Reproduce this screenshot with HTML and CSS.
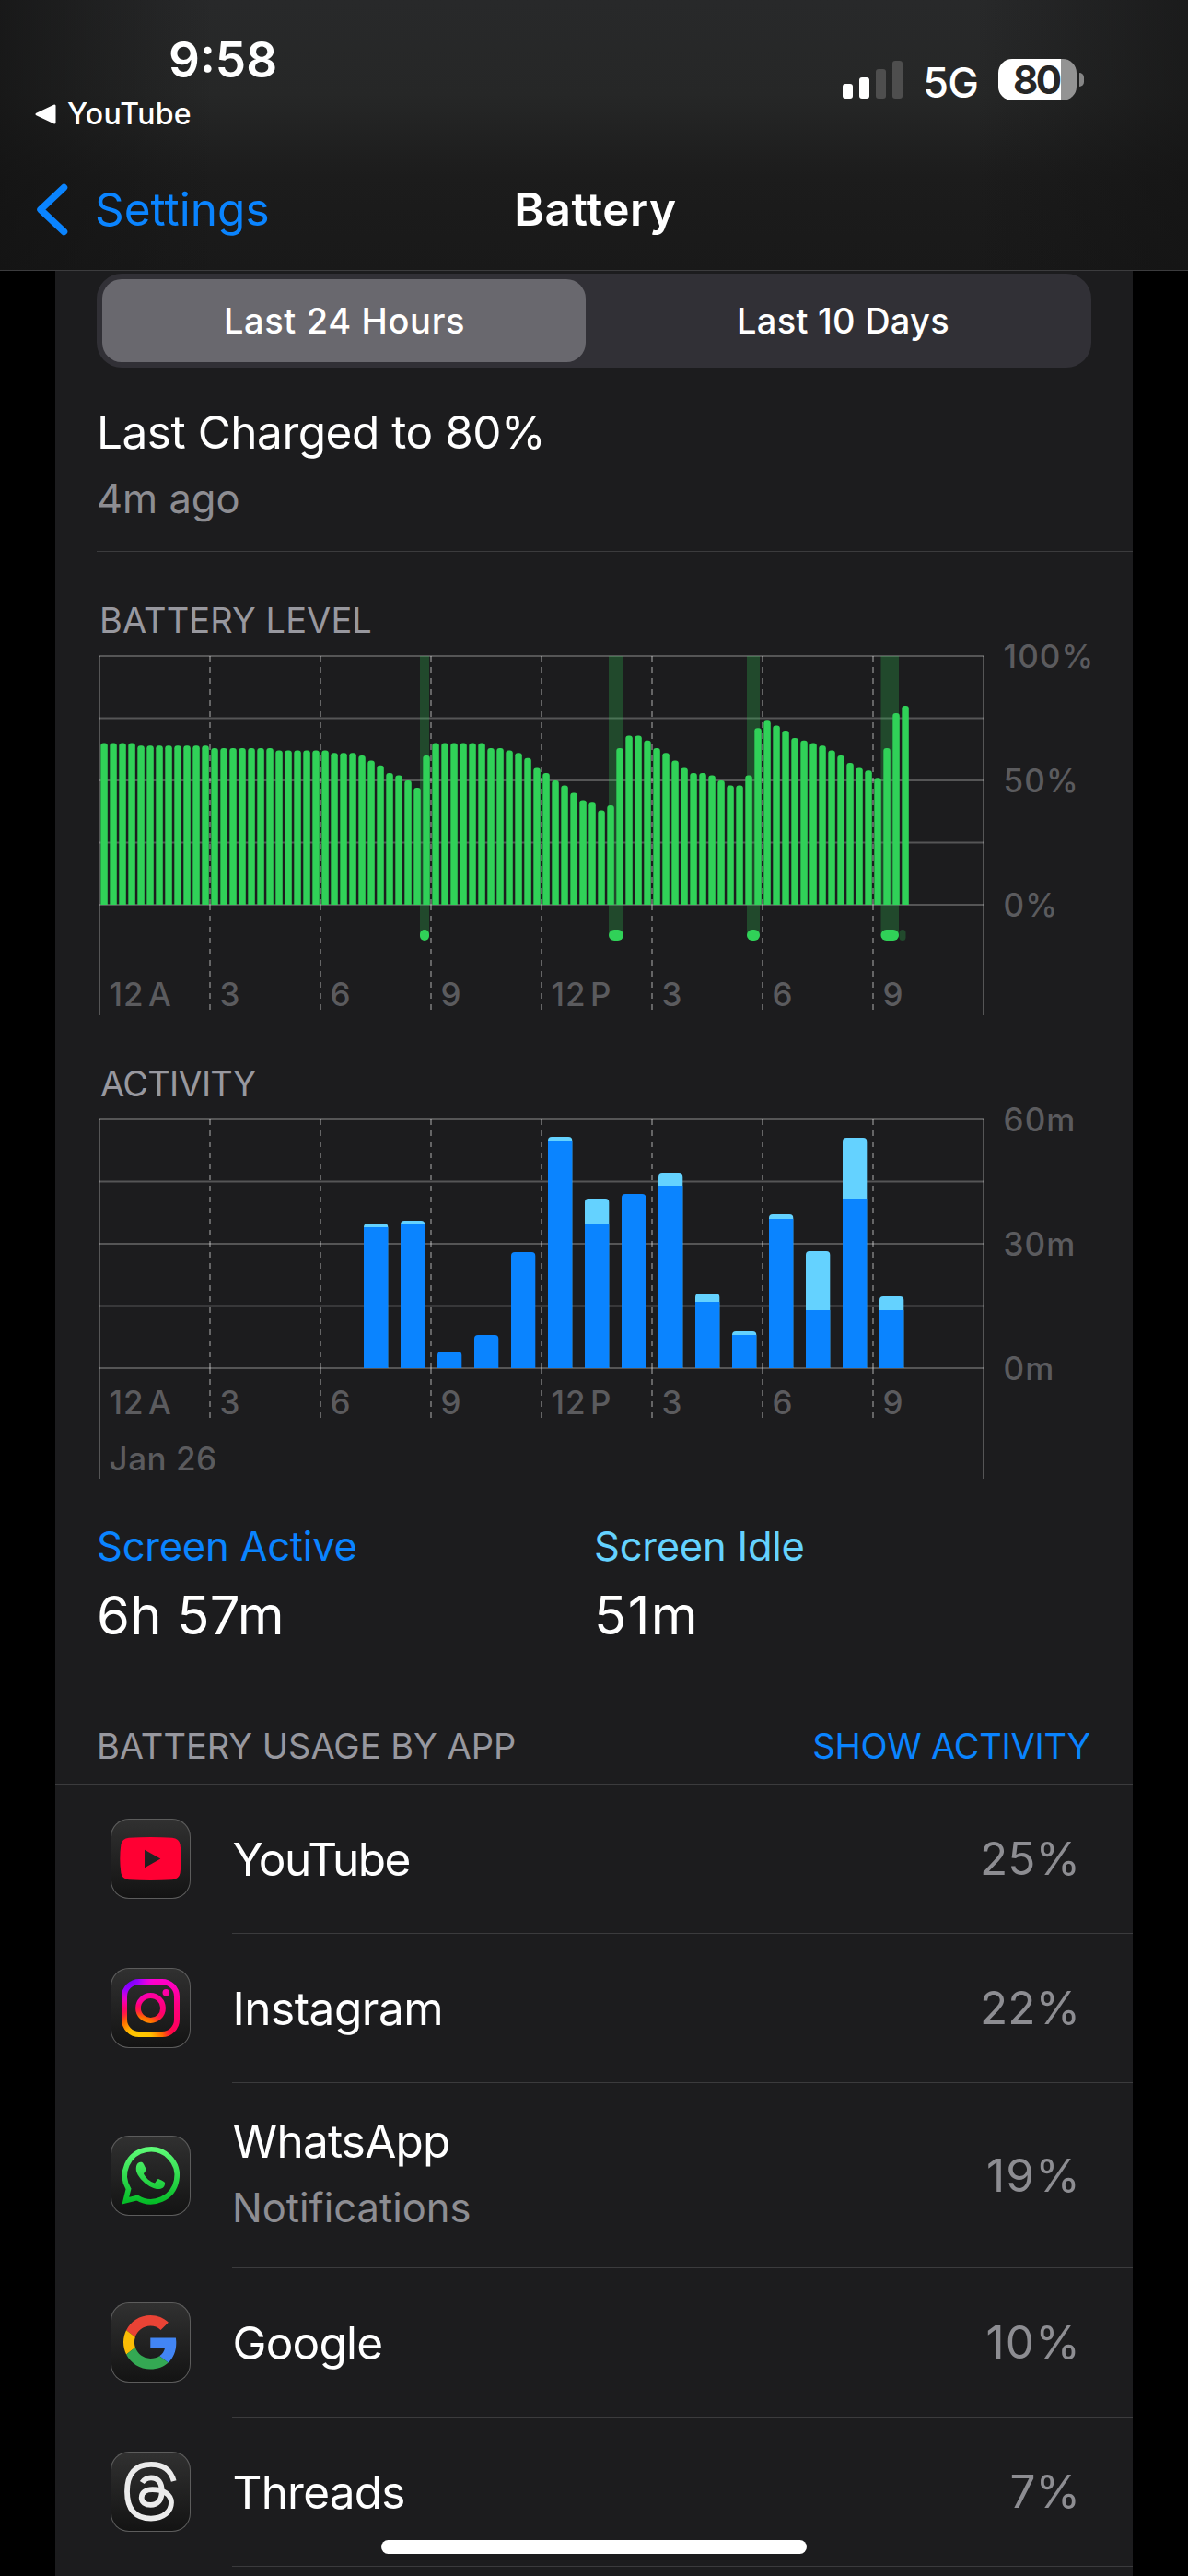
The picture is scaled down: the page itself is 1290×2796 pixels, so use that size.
FILE: index.html
```html
<!DOCTYPE html>
<html lang="en">
<head>
  <meta charset="UTF-8">
  <meta name="viewport" content="width=device-width, initial-scale=1.0">
  <title>Battery</title>
  <link rel="stylesheet" href="styles.css">
</head>
<body>
  <header class="header">
    <!-- status bar -->
    <div class="status">
      <div class="status-left">
        <div class="time">9:58</div>
        <div class="back-app">
          <svg class="back-app-icon" width="24" height="22" viewBox="0 0 24 22">
            <path d="M2 11 L21 2 V20 Z" fill="#fff" stroke="#fff" stroke-width="3" stroke-linejoin="round"/>
          </svg>
          <span>YouTube</span>
        </div>
      </div>
      <div class="status-right">
        <svg class="signal" width="66" height="42" viewBox="0 0 66 42">
          <rect x="0" y="25" width="11" height="16" rx="3" fill="#fff"/>
          <rect x="18" y="18" width="11" height="23" rx="3" fill="#fff"/>
          <rect x="36" y="9" width="11" height="32" rx="3" fill="#4e4e4e"/>
          <rect x="54" y="0" width="11" height="41" rx="3" fill="#4e4e4e"/>
        </svg>
        <span class="network">5G</span>
        <div class="battery">
          <div class="battery-body">80</div>
          <div class="battery-cap"></div>
        </div>
      </div>
    </div>

    <!-- navigation bar -->
    <nav class="nav">
      <a class="nav-back">
        <svg width="35" height="57" viewBox="0 0 35 57">
          <path d="M30.5 4.5 L5 28.5 L30.5 52.5" fill="none" stroke="#0a84ff" stroke-width="7.5" stroke-linecap="round" stroke-linejoin="round"/>
        </svg>
        <span>Settings</span>
      </a>
      <h1 class="nav-title">Battery</h1>
    </nav>
  </header>

  <main class="card">
    <div class="segmented">
      <div class="segment active">Last 24 Hours</div>
      <div class="segment">Last 10 Days</div>
    </div>

    <section class="charged">
      <div class="charged-title">Last Charged to 80%</div>
      <div class="charged-time">4m ago</div>
    </section>

    <section class="chart">
      <h2 class="chart-title">BATTERY LEVEL</h2>
      <svg class="chart-plot" id="level" width="1110" height="406" viewBox="-3 -16 1110 406"></svg>
    </section>

    <section class="chart">
      <h2 class="chart-title activity">ACTIVITY</h2>
      <svg class="chart-plot" id="activity" width="1110" height="406" viewBox="-3 -16 1110 406"></svg>
    </section>

    <section class="totals">
      <div class="total">
        <div class="total-name">Screen Active</div>
        <div class="total-value">6h 57m</div>
      </div>
      <div class="total idle">
        <div class="total-name">Screen Idle</div>
        <div class="total-value">51m</div>
      </div>
    </section>

    <div class="usage-head">
      <h2 class="usage-title">BATTERY USAGE BY APP</h2>
      <a class="usage-link">SHOW ACTIVITY</a>
    </div>

    <ul class="apps">
      <li class="app">
        <svg class="app-icon" viewBox="0 0 87 87">
          <path d="M20 20.8 Q43.5 19.2 67 20.8 Q74.5 21.6 75.6 28 Q77.8 43.5 75.6 59 Q74.5 65.4 67 66.2 Q43.5 67.8 20 66.2 Q12.5 65.4 11.4 59 Q9.2 43.5 11.4 28 Q12.5 21.6 20 20.8 Z M37 33.7 V53.3 L54.3 43.5 Z" fill="#ff0033" fill-rule="evenodd"/>
        </svg>
        <div class="app-row">
          <div class="app-name tight">YouTube</div>
          <div class="app-value">25%</div>
        </div>
      </li>
      <li class="app">
        <svg class="app-icon" viewBox="0 0 87 87">
          <defs>
            <linearGradient id="ig-base" x1="0" y1="0" x2="0" y2="1">
              <stop offset="0" stop-color="#ff00d0"/>
              <stop offset=".45" stop-color="#ff0080"/>
              <stop offset="1" stop-color="#ff0050"/>
            </linearGradient>
            <radialGradient id="ig-purple" cx="0.1" cy="0" r="0.48">
              <stop offset="0" stop-color="#6a00ff"/>
              <stop offset=".4" stop-color="#9a00ff"/>
              <stop offset="1" stop-color="#f000ff" stop-opacity="0"/>
            </radialGradient>
            <radialGradient id="ig-yellow" cx="0.3" cy="1.08" r="0.66">
              <stop offset="0" stop-color="#ffd000"/>
              <stop offset=".35" stop-color="#ffc000"/>
              <stop offset=".65" stop-color="#ff6a00"/>
              <stop offset="1" stop-color="#ff0030" stop-opacity="0"/>
            </radialGradient>
            <mask id="ig-mask">
              <rect x="15" y="15" width="57" height="57" rx="16" fill="none" stroke="#fff" stroke-width="6"/>
              <circle cx="43.5" cy="43.5" r="13.5" fill="none" stroke="#fff" stroke-width="5.8"/>
              <circle cx="60.3" cy="26.7" r="3.8" fill="#fff"/>
            </mask>
          </defs>
          <g mask="url(#ig-mask)">
            <rect x="12" y="12" width="63" height="63" fill="url(#ig-base)"/>
            <rect x="12" y="12" width="63" height="63" fill="url(#ig-purple)"/>
            <rect x="12" y="12" width="63" height="63" fill="url(#ig-yellow)"/>
          </g>
        </svg>
        <div class="app-row">
          <div class="app-name wide">Instagram</div>
          <div class="app-value">22%</div>
        </div>
      </li>
      <li class="app tall">
        <svg class="app-icon" viewBox="0 0 87 87">
          <defs>
            <linearGradient id="wa" gradientUnits="userSpaceOnUse" x1="0" y1="12" x2="0" y2="75">
              <stop offset="0" stop-color="#60fd79"/>
              <stop offset="1" stop-color="#02b924"/>
            </linearGradient>
          </defs>
          <path d="M19.5 58 L16.3 70.7 L29 67.5 A28.4 28.4 0 1 0 19.5 58 Z" fill="none" stroke="url(#wa)" stroke-width="5.6"/>
          <path d="M30 29.7 C31.3 28.7 33 28.7 34.3 29 C35.2 29.3 36 31 38.5 35.8 C39.3 37.5 36.5 40 36 41.5 C38.5 46 42.5 50 48 51.5 C49.3 50.5 50.5 46.8 52 47 C54 47.6 57 49.4 58.6 50.4 C59.7 51.3 59 55 56.8 56.7 C53.5 58.8 49 58.3 45 56.3 C38 53 31 46.5 28.5 40 C27.2 36 27.8 31.5 30 29.7 Z" fill="url(#wa)"/>
        </svg>
        <div class="app-row">
          <div class="app-text">
            <div class="app-name">WhatsApp</div>
            <div class="app-note">Notifications</div>
          </div>
          <div class="app-value one">19%</div>
        </div>
      </li>
      <li class="app">
        <svg class="app-icon" viewBox="0 0 87 87">
          <g transform="translate(14 14) scale(1.22)">
            <path fill="#ea4335" d="M24 9.5c3.54 0 6.71 1.22 9.21 3.6l6.85-6.85C35.9 2.38 30.47 0 24 0 14.62 0 6.51 5.38 2.56 13.22l7.98 6.19C12.43 13.72 17.74 9.5 24 9.5z"/>
            <path fill="#4285f4" d="M46.98 24.55c0-1.57-.15-3.09-.38-4.55H24v9.02h12.94c-.58 2.96-2.26 5.48-4.78 7.18l7.73 6c4.51-4.18 7.09-10.36 7.09-17.65z"/>
            <path fill="#fbbc05" d="M10.53 28.59c-.48-1.45-.76-2.99-.76-4.59s.27-3.14.76-4.59l-7.98-6.19C.92 16.46 0 20.12 0 24c0 3.88.92 7.54 2.56 10.78l7.97-6.19z"/>
            <path fill="#34a853" d="M24 48c6.48 0 11.93-2.13 15.89-5.81l-7.73-6c-2.15 1.45-4.92 2.3-8.16 2.3-6.26 0-11.57-4.22-13.47-9.91l-7.98 6.19C6.51 42.62 14.62 48 24 48z"/>
          </g>
        </svg>
        <div class="app-row">
          <div class="app-name">Google</div>
          <div class="app-value one">10%</div>
        </div>
      </li>
      <li class="app">
        <svg class="app-icon" viewBox="0 0 87 87">
          <path d="M68.7 32 C65.5 20 57 13.8 44 13.8 C27 13.8 18 24 18 43.2 C18 62.5 27 72.6 44 72.6 C57.5 72.6 66 65 66 55.3 C66 47 58 41.2 45.5 41.2 C38 41.2 33.7 44.8 33.7 50 C33.7 55 38 57.9 43.6 57.9 C51 57.9 55.7 53 55.7 43 C55.7 33.5 51.5 28.3 44 28.3 C39.8 28.3 36.5 30 34.3 33.5" fill="none" stroke="#ebebeb" stroke-width="5.8"/>
        </svg>
        <div class="app-row">
          <div class="app-name">Threads</div>
          <div class="app-value">7%</div>
        </div>
      </li>
    </ul>
  </main>

  <div class="home-bar"></div>

  <script>
    // battery level in %, one value every 15 minutes
    const levels = [
      65, 65, 65, 65, 64, 64, 64, 64, 64, 64, 64, 64, 63, 63, 63, 63, 63, 63, 63, 62,
      62, 62, 62, 62, 62, 61, 61, 61, 60, 58, 56, 53, 52, 50, 47, 60, 65, 65, 65, 65,
      65, 65, 63, 63, 62, 61, 59, 55, 53, 50, 48, 45, 42, 41, 38, 40, 63, 68, 68, 66,
      63, 61, 58, 55, 53, 53, 52, 50, 48, 48, 52, 71, 74, 72, 70, 67, 66, 65, 64, 62,
      60, 57, 55, 54, 51, 63, 77, 80
    ]

    // charging periods: start and width in px
    const charging = [[348, 10], [553, 16], [703, 14], [848.5, 19.5]]

    // activity: hour, top of the column, top of the screen active part (px)
    const activity = [
      [7, 157, 153], [8, 160, 157], [9, 18, 18], [10, 36, 36], [11, 126, 126],
      [12, 251, 247], [13, 184, 157], [14, 189, 189], [15, 212, 198], [16, 81, 72],
      [17, 40, 36], [18, 167, 162], [19, 127, 63], [20, 250, 184], [21, 78, 63]
    ]

    const hours = ['12 A', '3', '6', '9', '12 P', '3', '6', '9']
    const W = 960
    const H = 270

    // grid, hour labels and value labels
    function grid(dash, labelY, values) {
      let s = ''
      for (let i = 0; i < 5; i++) {
        s += `<path class="line" d="M0 ${i * H / 4} H${W}"/>`
      }
      s += `<path class="line" d="M0 0 V390 M${W} 0 V390"/>`
      hours.forEach((h, i) => {
        // the dashes start again below the axis
        if (i > 0) s += `<path class="line dash" d="M${i * 120} 0 V${H} M${i * 120} ${H} V${dash}"/>`
        s += `<text class="label hour" x="${i * 120 + 10.5}" y="${labelY}">${h}</text>`
      })
      values.forEach((v, i) => {
        s += `<text class="label" x="981.5" y="${i * H / 2 + 13}">${v}</text>`
      })
      return s
    }

    function column(x, w, h, r, cls) {
      return `<path class="${cls}" d="M${x} ${H} V${H - h + r} Q${x} ${H - h} ${x + r} ${H - h} H${x + w - r} Q${x + w} ${H - h} ${x + w} ${H - h + r} V${H} Z"/>`
    }

    function drawLevel() {
      let s = grid(384, 380, ['100%', '50%', '0%'])
      charging.forEach(([x, w]) => {
        s += `<rect class="charging" x="${x}" y="0" width="${w}" height="303"/>`
        s += `<rect class="green" x="${x}" y="297" width="${w}" height="12" rx="${Math.min(w / 2, 6)}"/>`
      })
      s += '<rect class="charging" x="868.5" y="297" width="7" height="12" rx="3.5"/>'
      levels.forEach((v, i) => {
        s += column(i * 10 + 1.3, 7.5, v * H / 100, 3, 'green')
      })
      document.querySelector('#level').innerHTML = s
    }

    function drawActivity() {
      let s = grid(324, 320, ['60m', '30m', '0m'])
      activity.forEach(([hour, top, active]) => {
        const x = hour * 40 + 7
        // rounded column first, then the square screen active part over it
        s += column(x, 26.3, top, 4, top > active ? 'idle-bar' : 'active-bar')
        if (top > active) {
          s += `<rect class="active-bar" x="${x}" y="${H - active}" width="26.3" height="${active}"/>`
        }
      })
      s += '<text class="label date" x="10.5" y="381">Jan 26</text>'
      document.querySelector('#activity').innerHTML = s
    }

    drawLevel()
    drawActivity()
  </script>
</body>
</html>
```
FILE: styles.css
```css
* {
  padding: 0;
  margin: 0;
  box-sizing: border-box;
  list-style: none;
}

body {
  height: 2796px;
  overflow: hidden;
  background-color: #000;
  color: #fff;
  font-family: Inter, "Liberation Sans", sans-serif;
}

h1, h2 {
  font-weight: 400;
}

/* header */
.header {
  height: 294px;
  border-bottom: 1px solid #3c3c3e;
  background: linear-gradient(to right, rgba(18, 18, 18, 0.7), rgba(18, 18, 18, 0) 18%, rgba(18, 18, 18, 0) 82%, rgba(18, 18, 18, 0.6)),
    linear-gradient(#28292a, #262727 35%, #1c1c1c 65%, #191919);
}

.status {
  display: flex;
  justify-content: space-between;
  height: 161px;
}

.status-left {
  padding-top: 35px;
}

.time {
  padding-left: 183px;
  font-size: 53px;
  font-weight: 600;
  line-height: 60px;
}

.back-app {
  display: flex;
  align-items: center;
  gap: 11px;
  margin-top: 9px;
  padding-left: 38px;
  font-size: 32px;
  font-weight: 500;
  line-height: 40px;
  letter-spacing: 0.3px;
}

.status-right {
  display: flex;
  align-items: flex-start;
  padding: 64px 113px 0 0;
}

.signal {
  margin-top: 2px;
}

.network {
  margin-left: 21px;
  font-size: 45px;
  font-weight: 500;
  line-height: 51px;
  letter-spacing: -0.8px;
}

.battery {
  display: flex;
  align-items: center;
  gap: 3px;
  margin-left: 22px;
}

.battery-body {
  width: 85px;
  height: 45px;
  padding-left: 16px;
  border-radius: 15px;
  background: linear-gradient(to right, #fff 68px, #939393 68px);
  color: #262626;
  font-size: 42px;
  font-weight: 700;
  line-height: 45px;
  letter-spacing: -2.5px;
}

.battery-cap {
  width: 5px;
  height: 15px;
  border-radius: 0 5px 5px 0;
  background-color: #868686;
}

.nav {
  display: grid;
  grid-template-columns: 1fr auto 1fr;
  align-items: center;
  height: 132px;
  font-size: 49.5px;
  line-height: 60px;
}

.nav-back {
  display: flex;
  align-items: center;
  gap: 29px;
  padding-left: 39px;
  color: #0a84ff;
}

.nav-title {
  padding-left: 3px;
  font-size: 49.5px;
  font-weight: 600;
  letter-spacing: 0.5px;
}

/* card */
.card {
  height: 2502px;
  margin: 0 60px;
  padding-top: 3px;
  background-color: #1c1c1e;
}

.segmented {
  display: grid;
  grid-template-columns: 525px 1fr;
  height: 102px;
  margin: 0 45px;
  padding: 6px;
  border-radius: 27px;
  background-color: #313036;
}

.segment {
  display: flex;
  justify-content: center;
  align-items: center;
  padding-left: 16px;
  font-size: 38px;
  font-weight: 500;
  letter-spacing: 0.25px;
}

.segment.active {
  padding-left: 1px;
  border-radius: 21px;
  background-color: #69686e;
  letter-spacing: 0.65px;
}

.charged {
  margin-left: 45px;
  padding: 40px 0 30px;
  border-bottom: 1px solid #3b3b3d;
}

.charged-title {
  font-size: 49.5px;
  line-height: 60px;
  letter-spacing: -0.48px;
}

.charged-time {
  margin-top: 15px;
  color: #8d8d92;
  font-size: 43.5px;
  line-height: 54px;
}

/* charts */
.chart {
  margin-left: 45px;
  padding-top: 51px;
}

.chart-title {
  padding-left: 3px;
  color: #98989f;
  font-size: 38px;
  line-height: 46px;
  letter-spacing: 0.1px;
}

.chart-title.activity {
  padding-left: 4px;
  letter-spacing: -0.75px;
}

.chart-plot {
  display: block;
  overflow: visible;
}

.line {
  fill: none;
  stroke: #fff;
  stroke-opacity: 0.25;
  stroke-width: 2;
}

.dash {
  stroke-opacity: 0.32;
  stroke-dasharray: 6 6;
}

.label {
  fill: #5b5b5e;
  font-size: 35px;
  font-weight: 500;
  letter-spacing: 1.1px;
}

.hour {
  letter-spacing: 0.9px;
  word-spacing: -5.5px;
}

.date {
  letter-spacing: 0.5px;
}

.green {
  fill: #30d158;
}

.charging {
  fill: #30d158;
  fill-opacity: 0.25;
}

.active-bar {
  fill: #0a84ff;
}

.idle-bar {
  fill: #64d2ff;
}

/* screen time */
.totals {
  display: grid;
  grid-template-columns: 540px 1fr;
  margin: 46px 0 0 45px;
}

.total-name {
  color: #0a84ff;
  font-size: 43.5px;
  line-height: 54px;
  letter-spacing: -0.23px;
}

.total.idle .total-name {
  color: #64d2ff;
}

.total-value {
  margin-top: 13px;
  font-size: 58px;
  line-height: 70px;
  letter-spacing: 0.2px;
}

.total.idle .total-value {
  letter-spacing: 1.5px;
}

/* usage by app */
.usage-head {
  display: flex;
  justify-content: space-between;
  margin-top: 84px;
  padding: 0 46px 18px 45px;
  border-bottom: 1px solid #3b3b3d;
  line-height: 46px;
}

.usage-title {
  color: #98989f;
  font-size: 38px;
}

.usage-link {
  color: #0a84ff;
  font-size: 38px;
  letter-spacing: -0.23px;
}

.app {
  display: flex;
  align-items: center;
  height: 162px;
  padding-left: 60px;
}

.app.tall {
  height: 201px;
}

.app-icon {
  width: 87px;
  height: 87px;
  margin-bottom: 1px;
  border-radius: 20px;
  background: linear-gradient(#313131, #131313);
  box-shadow: inset 0 0 0 1px #5c5c5c;
}

.app-row {
  display: flex;
  justify-content: space-between;
  align-items: center;
  flex: 1;
  height: 100%;
  margin-left: 45px;
  padding-right: 57px;
  border-bottom: 1px solid #3b3b3d;
}

.tall .app-text {
  padding-bottom: 5px;
}

.app-name {
  padding-left: 0.5px;
  font-size: 49.5px;
  line-height: 60px;
  letter-spacing: -0.8px;
}

.app-name.tight {
  letter-spacing: -1.5px;
}

.app-name.wide {
  letter-spacing: -0.5px;
}

.app-note {
  margin-top: 15px;
  color: #8d8d92;
  font-size: 43.5px;
  line-height: 54px;
}

.app-value {
  padding-bottom: 1px;
  color: #8d8d92;
  font-size: 49.5px;
  line-height: 60px;
}

.app-value.one {
  margin-right: -1px;
  letter-spacing: 1.2px;
}

.home-bar {
  position: absolute;
  left: 414px;
  top: 2757px;
  width: 462px;
  height: 15px;
  border-radius: 8px;
  background-color: #fff;
}
```
